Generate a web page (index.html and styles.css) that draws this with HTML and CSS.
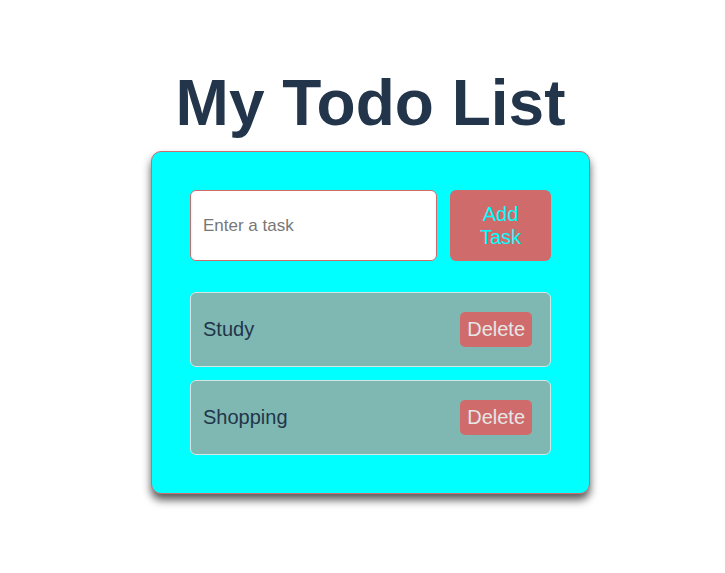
FILE: index.html
```html
<!DOCTYPE html>
<html>
<head>
<meta charset="utf-8">
<link rel="stylesheet" href="styles.css">
</head>
<body class="page">
  <h1 class="title">My Todo List</h1>
  <div class="card">
    <div class="entry">
      <input class="task-input" type="text" placeholder="Enter a task">
      <button class="add-btn">Add Task</button>
    </div>
    <ul class="tasks">
      <li class="task"><span class="task-name">Study</span><button class="del-btn">Delete</button></li>
      <li class="task"><span class="task-name">Shopping</span><button class="del-btn">Delete</button></li>
    </ul>
  </div>
</body>
</html>
```
FILE: styles.css
```css
html { overflow: hidden; }
.page {
  width: 100%;
  padding-bottom: 40px;
  display: flex;
  flex-direction: column;
  align-items: center;
  font-family: "Liberation Sans", Arial, sans-serif;
  background: #ffffff;
}
.title {
  margin: 58px 0 11px;
  font-size: 64px;
  font-weight: bold;
  color: #22354a;
}
.card {
  width: 361px;
  padding: 38px;
  background: #00ffff;
  border: 1px solid #d06b6b;
  border-radius: 10px;
  box-shadow: 0 6px 8px rgba(0, 0, 0, 0.65);
}
.entry {
  display: flex;
  gap: 13px;
  height: 71px;
}
.task-input {
  flex: 1;
  min-width: 0;
  box-sizing: border-box;
  height: 71px;
  padding: 0 12px;
  border: 1px solid #d06b6b;
  border-radius: 6px;
  background: #fff;
  font-family: "Liberation Sans", Arial, sans-serif;
  font-size: 17px;
  color: #333;
  outline: none;
}
.task-input::placeholder { color: #777; }
.add-btn {
  width: 101px;
  height: 71px;
  padding: 0 20px;
  border: none;
  border-radius: 6px;
  background: #d06b6b;
  color: #00ffff;
  font-family: "Liberation Sans", Arial, sans-serif;
  font-size: 20px;
  line-height: 23px;
}
.tasks {
  list-style: none;
  margin: 31px 0 0;
  padding: 0;
  display: flex;
  flex-direction: column;
  gap: 13px;
}
.task {
  height: 73px;
  display: flex;
  align-items: center;
  justify-content: space-between;
  padding: 0 18px 0 12px;
  border: 1px solid #d3e6e4;
  border-radius: 6px;
  background: #7fb8b2;
}
.task-name {
  font-size: 20px;
  color: #22354a;
}
.del-btn {
  height: 35px;
  padding: 0 7px;
  border: none;
  border-radius: 5px;
  background: #d06b6b;
  color: #e6e6e6;
  font-family: "Liberation Sans", Arial, sans-serif;
  font-size: 20px;
}
```
